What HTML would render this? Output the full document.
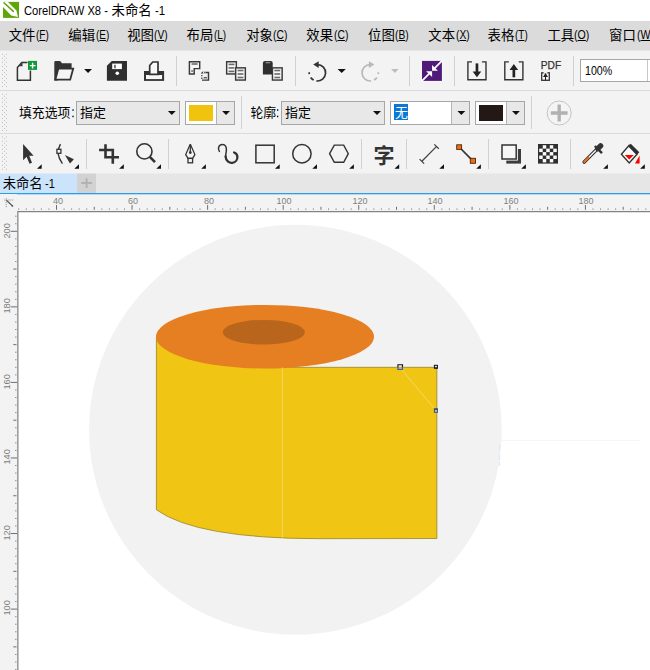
<!DOCTYPE html>
<html><head><meta charset="utf-8"><title>CorelDRAW X8</title>
<style>
html,body{margin:0;padding:0;}
body{width:650px;height:670px;overflow:hidden;background:#fff;position:relative;font-family:"Liberation Sans",sans-serif;}
.a{position:absolute;}
.t{position:absolute;white-space:nowrap;transform-origin:0 50%;line-height:1;color:#000;}
u{text-decoration:underline;text-underline-offset:1px;}
svg.ov{position:absolute;left:0;top:0;width:650px;height:670px;overflow:hidden;}
svg.ov text{font-family:"Liberation Sans","Noto Sans CJK SC",sans-serif;}
</style></head><body>
<div class="a" style="left:0px;top:0px;width:650px;height:21px;background:#fff;"></div>
<div class="a" style="left:0px;top:21px;width:650px;height:29px;background:#dbdbdb;"></div>
<div class="a" style="left:0px;top:50px;width:650px;height:123px;background:#f3f3f3;"></div>
<div class="a" style="left:0px;top:50px;width:650px;height:1px;background:#e6e6e6;"></div>
<div class="a" style="left:0px;top:90px;width:650px;height:1px;background:#dadada;"></div>
<div class="a" style="left:0px;top:133px;width:650px;height:1px;background:#dadada;"></div>
<div class="a" style="left:0px;top:173px;width:650px;height:1px;background:#ececec;"></div>
<div class="a" style="left:0px;top:174px;width:650px;height:19px;background:#e6e6e6;"></div>
<div class="a" style="left:0px;top:173px;width:77px;height:1px;background:#dfecf7;"></div>
<div class="a" style="left:0px;top:174px;width:77px;height:19px;background:#cce4fb;"></div>
<div class="a" style="left:77px;top:173px;width:19px;height:1px;background:#e2e2e2;"></div>
<div class="a" style="left:77px;top:174px;width:19px;height:19px;background:#d2d2d2;"></div>
<div class="a" style="left:0px;top:193px;width:650px;height:1px;background:#2a9ee6;"></div>
<div class="a" style="left:0px;top:194px;width:650px;height:18px;background:#f3f3f3;"></div>
<div class="a" style="left:0px;top:194px;width:650px;height:1px;background:#b7d9ef;"></div>
<div class="a" style="left:0px;top:194px;width:17px;height:476px;background:#f3f3f3;"></div>
<div class="a" style="left:176px;top:56px;width:1px;height:30px;background:#d0d0d0;"></div>
<div class="a" style="left:295px;top:56px;width:1px;height:30px;background:#d0d0d0;"></div>
<div class="a" style="left:409px;top:56px;width:1px;height:30px;background:#d0d0d0;"></div>
<div class="a" style="left:454px;top:56px;width:1px;height:30px;background:#d0d0d0;"></div>
<div class="a" style="left:573px;top:56px;width:1px;height:30px;background:#d0d0d0;"></div>
<div class="a" style="left:241px;top:96px;width:1px;height:33px;background:#d0d0d0;"></div>
<div class="a" style="left:531px;top:96px;width:1px;height:33px;background:#d0d0d0;"></div>
<div class="a" style="left:86px;top:139px;width:1px;height:30px;background:#d0d0d0;"></div>
<div class="a" style="left:168px;top:139px;width:1px;height:30px;background:#d0d0d0;"></div>
<div class="a" style="left:361px;top:139px;width:1px;height:30px;background:#d0d0d0;"></div>
<div class="a" style="left:406px;top:139px;width:1px;height:30px;background:#d0d0d0;"></div>
<div class="a" style="left:488px;top:139px;width:1px;height:30px;background:#d0d0d0;"></div>
<div class="a" style="left:570px;top:139px;width:1px;height:30px;background:#d0d0d0;"></div>
<div class="a" style="left:580px;top:59px;width:80px;height:23px;background:#fff;border:1px solid #a6a6a6;box-sizing:border-box;"></div>
<div class="a" style="left:647px;top:60px;width:1px;height:21px;background:#c8c8c8;"></div>
<div class="a" style="left:76px;top:101px;width:104px;height:24px;background:#e8e8e8;border:1px solid #a6a6a6;box-sizing:border-box;"></div>
<div class="a" style="left:185px;top:101px;width:50px;height:24px;background:#fff;border:1px solid #a6a6a6;box-sizing:border-box;"></div>
<div class="a" style="left:216px;top:102px;width:18px;height:22px;background:#e8e8e8;"></div>
<div class="a" style="left:216px;top:102px;width:1px;height:22px;background:#b4b4b4;"></div>
<div class="a" style="left:189px;top:105px;width:24px;height:16px;background:#f0c30f;"></div>
<div class="a" style="left:281px;top:101px;width:104px;height:24px;background:#e8e8e8;border:1px solid #a6a6a6;box-sizing:border-box;"></div>
<div class="a" style="left:390px;top:101px;width:80px;height:24px;background:#fff;border:1px solid #a6a6a6;box-sizing:border-box;"></div>
<div class="a" style="left:451px;top:102px;width:18px;height:22px;background:#e8e8e8;"></div>
<div class="a" style="left:451px;top:102px;width:1px;height:22px;background:#b4b4b4;"></div>
<div class="a" style="left:394px;top:104px;width:14px;height:16px;background:#0a78d6;"></div>
<div class="a" style="left:475px;top:101px;width:50px;height:24px;background:#fff;border:1px solid #a6a6a6;box-sizing:border-box;"></div>
<div class="a" style="left:506px;top:102px;width:18px;height:22px;background:#e8e8e8;"></div>
<div class="a" style="left:506px;top:102px;width:1px;height:22px;background:#b4b4b4;"></div>
<div class="a" style="left:479px;top:105px;width:24px;height:16px;background:#231815;"></div>
<svg class="ov" viewBox="0 0 650 670">
<ellipse cx="295.4" cy="429.7" rx="206.3" ry="205" fill="#f2f2f2"/><path d="M501 440.5H640" stroke="#f6f6f6" stroke-width="1"/><path d="M499.6 445v5M499.6 455v5M499.6 462v4" stroke="#d6e6f4" stroke-width="1"/>
<path d="M156.4 337 L156.4 509.8 Q196.5 538.7 320 538.7 L436.9 538.5 L436.9 367.3 L282 367.3 Q200 362 156.5 337Z" fill="#f0c514" stroke="#7a6a12" stroke-width="0.6"/>
<ellipse cx="265" cy="336.7" rx="109" ry="31.8" fill="#e67e22"/>
<ellipse cx="263.8" cy="332.2" rx="41" ry="12.3" fill="#b9651b"/>
<path d="M282.4 367.5V537.8" stroke="#f5dc7a" stroke-width="0.8" fill="none"/>
<path d="M400 367.5L436 410.7" stroke="#f5dc7a" stroke-width="0.8" fill="none"/>
<path d="M397.9 367.3V364.7H402.5V367.3" fill="none" stroke="#111" stroke-width="1.1"/><path d="M397.9 367.3V369.4H402.5V367.3" fill="none" stroke="#2a62d8" stroke-width="1.1"/>
<rect x="434.4" y="365.3" width="3" height="3" fill="#3a66c8" stroke="#111" stroke-width="1"/><path d="M434.9 365.9H436.9V367H434.9Z" fill="#ddd"/>
<rect x="434.4" y="409.3" width="3" height="3" fill="#e9c63a" stroke="#2050c0" stroke-width="1"/><path d="M433.9 408.8H437.9" stroke="#222" stroke-width="0.7"/>
<path d="M2 53.80h1v1h-1zM6 53.80h1v1h-1zM4 55.81h1v1h-1zM2 57.83h1v1h-1zM6 57.83h1v1h-1zM4 59.84h1v1h-1zM2 61.86h1v1h-1zM6 61.86h1v1h-1zM4 63.87h1v1h-1zM2 65.89h1v1h-1zM6 65.89h1v1h-1zM4 67.90h1v1h-1zM2 69.92h1v1h-1zM6 69.92h1v1h-1zM4 71.93h1v1h-1zM2 73.95h1v1h-1zM6 73.95h1v1h-1zM4 75.96h1v1h-1zM2 77.98h1v1h-1zM6 77.98h1v1h-1zM4 79.99h1v1h-1zM2 82.01h1v1h-1zM6 82.01h1v1h-1zM4 84.02h1v1h-1zM2 86.04h1v1h-1zM6 86.04h1v1h-1zM2 93.80h1v1h-1zM6 93.80h1v1h-1zM4 95.81h1v1h-1zM2 97.83h1v1h-1zM6 97.83h1v1h-1zM4 99.84h1v1h-1zM2 101.86h1v1h-1zM6 101.86h1v1h-1zM4 103.87h1v1h-1zM2 105.89h1v1h-1zM6 105.89h1v1h-1zM4 107.90h1v1h-1zM2 109.92h1v1h-1zM6 109.92h1v1h-1zM4 111.93h1v1h-1zM2 113.95h1v1h-1zM6 113.95h1v1h-1zM4 115.96h1v1h-1zM2 117.98h1v1h-1zM6 117.98h1v1h-1zM4 119.99h1v1h-1zM2 122.01h1v1h-1zM6 122.01h1v1h-1zM4 124.02h1v1h-1zM2 126.04h1v1h-1zM6 126.04h1v1h-1zM4 128.05h1v1h-1zM2 130.07h1v1h-1zM6 130.07h1v1h-1zM2 136.60h1v1h-1zM6 136.60h1v1h-1zM4 138.61h1v1h-1zM2 140.63h1v1h-1zM6 140.63h1v1h-1zM4 142.64h1v1h-1zM2 144.66h1v1h-1zM6 144.66h1v1h-1zM4 146.67h1v1h-1zM2 148.69h1v1h-1zM6 148.69h1v1h-1zM4 150.70h1v1h-1zM2 152.72h1v1h-1zM6 152.72h1v1h-1zM4 154.73h1v1h-1zM2 156.75h1v1h-1zM6 156.75h1v1h-1zM4 158.76h1v1h-1zM2 160.78h1v1h-1zM6 160.78h1v1h-1zM4 162.79h1v1h-1zM2 164.81h1v1h-1zM6 164.81h1v1h-1zM4 166.82h1v1h-1zM2 168.84h1v1h-1zM6 168.84h1v1h-1z" fill="#bdbdbd"/>
<path d="M17.85 670V211.5H650" fill="none" stroke="#838383" stroke-width="1.25"/>
<path d="M56.50 209.8V205.00M94.28 209.8V206.80M132.06 209.8V205.00M169.84 209.8V206.80M207.62 209.8V205.00M245.40 209.8V206.80M283.18 209.8V205.00M320.96 209.8V206.80M358.74 209.8V205.00M396.52 209.8V206.80M434.30 209.8V205.00M472.08 209.8V206.80M509.86 209.8V205.00M547.64 209.8V206.80M585.42 209.8V205.00M623.20 209.8V206.80M17.2 684.66H10.70M16.5 646.88H13.30M17.2 609.10H10.70M16.5 571.32H13.30M17.2 533.54H10.70M16.5 495.76H13.30M17.2 457.98H10.70M16.5 420.20H13.30M17.2 382.42H10.70M16.5 344.64H13.30M17.2 306.86H10.70M16.5 269.08H13.30M17.2 231.30H10.70" stroke="#6e6e6e" stroke-width="1" fill="none"/>
<path d="M18.72 209.8V208.40M26.28 209.8V208.40M33.83 209.8V208.40M41.39 209.8V208.40M48.94 209.8V208.40M64.06 209.8V208.40M71.61 209.8V208.40M79.17 209.8V208.40M86.72 209.8V208.40M101.84 209.8V208.40M109.39 209.8V208.40M116.95 209.8V208.40M124.50 209.8V208.40M139.62 209.8V208.40M147.17 209.8V208.40M154.73 209.8V208.40M162.28 209.8V208.40M177.40 209.8V208.40M184.95 209.8V208.40M192.51 209.8V208.40M200.06 209.8V208.40M215.18 209.8V208.40M222.73 209.8V208.40M230.29 209.8V208.40M237.84 209.8V208.40M252.96 209.8V208.40M260.51 209.8V208.40M268.07 209.8V208.40M275.62 209.8V208.40M290.74 209.8V208.40M298.29 209.8V208.40M305.85 209.8V208.40M313.40 209.8V208.40M328.52 209.8V208.40M336.07 209.8V208.40M343.63 209.8V208.40M351.18 209.8V208.40M366.30 209.8V208.40M373.85 209.8V208.40M381.41 209.8V208.40M388.96 209.8V208.40M404.08 209.8V208.40M411.63 209.8V208.40M419.19 209.8V208.40M426.74 209.8V208.40M441.86 209.8V208.40M449.41 209.8V208.40M456.97 209.8V208.40M464.52 209.8V208.40M479.64 209.8V208.40M487.19 209.8V208.40M494.75 209.8V208.40M502.30 209.8V208.40M517.42 209.8V208.40M524.97 209.8V208.40M532.53 209.8V208.40M540.08 209.8V208.40M555.20 209.8V208.40M562.75 209.8V208.40M570.31 209.8V208.40M577.86 209.8V208.40M592.98 209.8V208.40M600.53 209.8V208.40M608.09 209.8V208.40M615.64 209.8V208.40M630.76 209.8V208.40M638.31 209.8V208.40M645.87 209.8V208.40M653.42 209.8V208.40M16.5 677.10H15.10M16.5 669.55H15.10M16.5 661.99H15.10M16.5 654.44H15.10M16.5 639.32H15.10M16.5 631.77H15.10M16.5 624.21H15.10M16.5 616.66H15.10M16.5 601.54H15.10M16.5 593.99H15.10M16.5 586.43H15.10M16.5 578.88H15.10M16.5 563.76H15.10M16.5 556.21H15.10M16.5 548.65H15.10M16.5 541.10H15.10M16.5 525.98H15.10M16.5 518.43H15.10M16.5 510.87H15.10M16.5 503.32H15.10M16.5 488.20H15.10M16.5 480.65H15.10M16.5 473.09H15.10M16.5 465.54H15.10M16.5 450.42H15.10M16.5 442.87H15.10M16.5 435.31H15.10M16.5 427.76H15.10M16.5 412.64H15.10M16.5 405.09H15.10M16.5 397.53H15.10M16.5 389.98H15.10M16.5 374.86H15.10M16.5 367.31H15.10M16.5 359.75H15.10M16.5 352.20H15.10M16.5 337.08H15.10M16.5 329.53H15.10M16.5 321.97H15.10M16.5 314.42H15.10M16.5 299.30H15.10M16.5 291.75H15.10M16.5 284.19H15.10M16.5 276.64H15.10M16.5 261.52H15.10M16.5 253.97H15.10M16.5 246.41H15.10M16.5 238.86H15.10M16.5 223.74H15.10M16.5 216.19H15.10" stroke="#8c8c8c" stroke-width="1" fill="none"/>
<g fill="none"><path d="M4.3 200H14M6.2 198.2V207.8" stroke="#8a8a8a" stroke-width="1" stroke-dasharray="1 1"/><path d="M6.4 200.2L12.3 205.8" stroke="#5a5a5a" stroke-width="1.2"/><circle cx="12.4" cy="205.9" r="0.9" fill="#5a5a5a"/></g>
<text x="111.6" y="15.3" font-size="13.4" fill="#000">未命名</text>
<text x="8.7" y="40.2" font-size="13.4" fill="#000">文件</text>
<text x="68.3" y="40.2" font-size="13.4" fill="#000">编辑</text>
<text x="127.2" y="40.2" font-size="13.4" fill="#000">视图</text>
<text x="186.6" y="40.2" font-size="13.4" fill="#000">布局</text>
<text x="246.2" y="40.2" font-size="13.4" fill="#000">对象</text>
<text x="306.3" y="40.2" font-size="13.4" fill="#000">效果</text>
<text x="368.1" y="40.2" font-size="13.4" fill="#000">位图</text>
<text x="428.3" y="40.2" font-size="13.4" fill="#000">文本</text>
<text x="487.6" y="40.2" font-size="13.4" fill="#000">表格</text>
<text x="547.4" y="40.2" font-size="13.4" fill="#000">工具</text>
<text x="609" y="40.2" font-size="13.4" fill="#000">窗口</text>
<text x="19" y="117.4" font-size="12.85" fill="#000">填充选项</text>
<text x="80" y="117.4" font-size="12.9" fill="#000">指定</text>
<text x="250.4" y="117.4" font-size="12.9" fill="#000">轮廓</text>
<text x="285" y="117.4" font-size="12.9" fill="#000">指定</text>
<text x="394.9" y="117.4" font-size="12.9" fill="#fff">无</text>
<text x="2.7" y="188" font-size="13.3" fill="#000">未命名</text>
<g fill="#000"><rect x="72.4" y="109.3" width="1.3" height="1.5"/><rect x="72.4" y="115.7" width="1.3" height="1.5"/><rect x="277" y="109.3" width="1.3" height="1.5"/><rect x="277" y="115.7" width="1.3" height="1.5"/></g>
<g><rect x="3" y="1.9" width="16" height="16" fill="#5fa607"/><path d="M3 1.9H8L16.4 10.4L18 17L11.2 15.4L3 7Z" fill="#fff"/><path d="M4 2.7L13.3 11.4" stroke="#5fa607" stroke-width="1.5" stroke-linecap="round"/></g>
<g fill="none" stroke="#333" stroke-width="1.5"><path d="M27.5 62.6H21.8L17.4 67.6V80.2H30.4V70.5"/></g><path d="M22.5 62.5V66.3H19.3Z" fill="#333"/><rect x="28" y="60.9" width="9" height="9" fill="#0f9a38"/><path d="M29.8 65.6H35.5M32.6 62.7V68.4" stroke="#fff" stroke-width="1.4" fill="none"/>
<g><path d="M54.3 62.2Q54.3 60.9 55.6 60.9H59.6Q60.4 60.9 60.9 61.7L61.9 63.3H71.6V72H58V80.6H54.3Z" fill="#333"/><path d="M58.4 68.6H73.2L70.2 79.7H55.3Z" fill="#f4f4f4" stroke="#333" stroke-width="1.8" stroke-linejoin="miter"/></g>
<path d="M84.1 69H92L88.05 73Z" fill="#111"/>
<g><path d="M111.8 60.9H127V80.7H106.9V65.8Z" fill="#2f2f2f"/><rect x="112.2" y="63.6" width="9.7" height="5.5" fill="#fff"/><rect x="114.1" y="64.8" width="1.7" height="3.5" fill="#666"/><circle cx="117.3" cy="73.2" r="1.8" fill="#fff"/></g>
<g><path d="M144 71H164.1V80.9H144Z" fill="#333"/><rect x="146" y="75" width="16.1" height="4.1" fill="#f8f8f8"/><path d="M149.7 74.3V65.5L152.7 62H158V74.3Z" fill="#f8f8f8" stroke="#333" stroke-width="1.7"/></g>
<g fill="#f6f6f6" stroke="#3a3a3a" stroke-width="1.45"><path d="M189.4 61.7H199.7V68.6H194.2V74H189.4Z"/></g><path d="M191.6 64H197.6" stroke="#6a6a6a" stroke-width="1.6"/><path d="M191.2 71H193" stroke="#6a6a6a" stroke-width="1.6"/><path d="M202 72.4H208.5V80.1H202" fill="none" stroke="#3a3a3a" stroke-width="1.45"/><path d="M201.8 72.4V80" stroke="#3a3a3a" stroke-width="1.2" stroke-dasharray="1.3 1.3" fill="none"/><path d="M202 72.4H206" stroke="#f0f0f0" stroke-width="1.4" stroke-dasharray="1.2 1.4" stroke-dashoffset="-1"/><path d="M203.6 77.7H207" stroke="#6a6a6a" stroke-width="1.6"/>
<rect x="226.65" y="61.75" width="9.7" height="12.2" fill="#f6f6f6" stroke="#3a3a3a" stroke-width="1.45"/><path d="M228.6 64.4H234.4" stroke="#6a6a6a" stroke-width="1.6"/><path d="M228.6 67.9H234.4" stroke="#6a6a6a" stroke-width="1.6"/><path d="M228.6 71.4H234.4" stroke="#6a6a6a" stroke-width="1.6"/><rect x="235.65" y="67.85000000000001" width="9.7" height="12.2" fill="#f6f6f6" stroke="#3a3a3a" stroke-width="1.45"/><path d="M237.6 70.5H243.4" stroke="#6a6a6a" stroke-width="1.6"/><path d="M237.6 74.0H243.4" stroke="#6a6a6a" stroke-width="1.6"/><path d="M237.6 77.5H243.4" stroke="#6a6a6a" stroke-width="1.6"/>
<path d="M262.9 63.1Q262.9 61.1 264.9 61.1H270.7Q272.7 61.1 272.7 63.1V74.6H262.9Z" fill="#2f2f2f"/><path d="M265.6 62.6H270.2" stroke="#8a8a8a" stroke-width="1.4"/><rect x="272.45" y="67.85000000000001" width="9.7" height="12.2" fill="#f6f6f6" stroke="#3a3a3a" stroke-width="1.45"/><path d="M274.40000000000003 70.5H280.2" stroke="#6a6a6a" stroke-width="1.6"/><path d="M274.40000000000003 74.0H280.2" stroke="#6a6a6a" stroke-width="1.6"/><path d="M274.40000000000003 77.5H280.2" stroke="#6a6a6a" stroke-width="1.6"/>
<path d="M317.40 64.60A8.2 8.2 0 1 1 316.40 80.94" fill="none" stroke="#333" stroke-width="1.7"/><path d="M313.68 80.11A8.2 8.2 0 0 1 310.68 77.50" fill="none" stroke="#333" stroke-width="1.7"/><path d="M309.32 74.22A8.2 8.2 0 0 1 309.22 72.23" fill="none" stroke="#333" stroke-width="1.7"/><path d="M313.20 64.60L318.70 61.30V67.90Z" fill="#333"/>
<path d="M337.6 68.9H345.8L341.70000000000005 73Z" fill="#111"/>
<path d="M370.20 64.60A8.2 8.2 0 1 0 371.20 80.94" fill="none" stroke="#b9b9b9" stroke-width="1.7"/><path d="M373.92 80.11A8.2 8.2 0 0 0 376.92 77.50" fill="none" stroke="#b9b9b9" stroke-width="1.7"/><path d="M378.28 74.22A8.2 8.2 0 0 0 378.38 72.23" fill="none" stroke="#b9b9b9" stroke-width="1.7"/><path d="M374.40 64.60L368.90 61.30V67.90Z" fill="#b9b9b9"/>
<path d="M391.1 68.9H398.7L394.9 73Z" fill="#bdbdbd"/>
<g><rect x="421.5" y="60.4" width="20.9" height="21" fill="#fbfbfb"/><rect x="422" y="60.9" width="19.9" height="20" fill="#4f1a78"/><path d="M441.9 60.9L434 68.8M422 80.9L430 72.9" stroke="#fff" stroke-width="1.7"/><path d="M432.1 70.8V64.9L437.9 70.8ZM432.1 71.3H426.1L432.1 77.1Z" fill="#fff"/></g>
<path d="M472.0 61.9H467.9V79.8H486.0V61.9H481.9" fill="none" stroke="#333" stroke-width="1.4"/><path d="M476.95 63.4V73" stroke="#222" stroke-width="2.7"/><path d="M472.65 71.6H481.25L476.95 77.3Z" fill="#222"/>
<path d="M508.90000000000003 61.9H504.8V79.8H522.9V61.9H518.8000000000001" fill="none" stroke="#333" stroke-width="1.4"/><path d="M513.85 77.3V68.5" stroke="#222" stroke-width="2.7"/><path d="M509.55 70H518.15L513.85 64.1Z" fill="#222"/>
<rect x="541.7" y="72.8" width="7.6" height="7.5" fill="#fafafa" stroke="#333" stroke-width="1.3"/><path d="M543.6 72.8H547.4" stroke="#fafafa" stroke-width="1.5"/><path d="M543 76.9L545.5 73L548 76.9Z" fill="#222"/><path d="M545.5 76.5V80.3" stroke="#222" stroke-width="1.1"/>
<path d="M167.9 111H175.7L171.8 115Z" fill="#111"/>
<path d="M222.1 111H230L226.05 115Z" fill="#111"/>
<path d="M373 111H381L377.0 115Z" fill="#111"/>
<path d="M457.4 111H465.3L461.35 115Z" fill="#111"/>
<path d="M512 111H519.9L515.95 115Z" fill="#111"/>
<circle cx="559.2" cy="113" r="12" fill="#f4f4f4" stroke="#c4c4c4" stroke-width="1"/><path d="M550.8 113H567.6M559.2 104.6V121.4" stroke="#b1b1b1" stroke-width="3.3"/>
<path d="M81.2 183.1H92M86.6 178.2V188" stroke="#b2b2b2" stroke-width="2"/>
<path d="M23.1 143.9V160.2L26.6 156.8L29.5 163.8L32 162.7L29.2 155.8H33.6Z" fill="#333"/><path d="M41.7 164.2V168.8H37.0Z" fill="#111"/>
<path d="M60.4 144.2C57.7 149 56.7 156 62.4 163.6" fill="none" stroke="#333" stroke-width="1.4"/><rect x="56.9" y="149.3" width="4" height="4" fill="#fafafa" stroke="#333" stroke-width="1.3"/><path d="M64.9 154.9L73.9 159.2L70 163.4Z" fill="#333"/><path d="M79 164.2V168.8H74.3Z" fill="#111"/>
<path d="M105.5 144.3V157.3H119M99.1 150H112.8V163.7" fill="none" stroke="#333" stroke-width="2.6"/><path d="M123.8 164.2V168.8H119.1Z" fill="#111"/>
<circle cx="144.4" cy="151.4" r="7.6" fill="none" stroke="#333" stroke-width="1.6"/><path d="M149.8 156.9L155 162.2" stroke="#333" stroke-width="2.6"/><path d="M161 164.2V168.8H156.3Z" fill="#111"/>
<g fill="none" stroke="#333" stroke-width="1.3"><path d="M190.1 144.6L185.7 154.6L188 158.4H192.6L194.9 154.6L190.5 144.6Z"/><path d="M190.3 145V152"/><circle cx="190.3" cy="152.6" r="0.8" fill="#333"/><rect x="188" y="158.4" width="4.6" height="4.4"/></g><path d="M205.9 164.2V168.8H201.20000000000002Z" fill="#111"/>
<path d="M219.4 151.4C217.4 148.5 218.6 144.6 222.4 144.5C225.4 144.4 226.6 147 226.4 150C226.2 153.5 225 156 225.8 158.6" fill="none" stroke="#333" stroke-width="1.5" stroke-linecap="round"/><path d="M225.6 156.5C225.8 160.6 229.2 163.3 232.4 162.8C235.6 162.3 237.6 159.5 237.4 156.6C237.3 154.6 236 153.2 234.1 152.5" fill="none" stroke="#333" stroke-width="2.3" stroke-linecap="round"/>
<rect x="255.9" y="145.2" width="18.3" height="17.6" fill="none" stroke="#333" stroke-width="1.5"/><path d="M279.7 164.2V168.8H275.0Z" fill="#111"/>
<circle cx="301.9" cy="153.8" r="9.2" fill="none" stroke="#333" stroke-width="1.5"/><path d="M317 164.2V168.8H312.3Z" fill="#111"/>
<path d="M329.6 153.7L334.3 145.1H343.7L348.3 153.7L343.7 162.3H334.3Z" fill="none" stroke="#333" stroke-width="1.4"/><path d="M353.9 164.2V168.8H349.2Z" fill="#111"/>
<text x="373.4" y="162.8" font-size="21" font-weight="bold" fill="#333">字</text><path d="M399.2 164.2V168.8H394.5Z" fill="#111"/>
<path d="M421.9 161.2L436.6 146.4M419.6 159.1L424.1 163.6M434.3 144.4L438.8 148.8" fill="none" stroke="#444" stroke-width="1.3"/><path d="M444 164.2V168.8H439.3Z" fill="#111"/>
<path d="M459.2 147L472.8 160.8" stroke="#333" stroke-width="1.7"/><rect x="456.7" y="144.8" width="4.9" height="4.6" fill="#ff6a00" stroke="#3a2a1a" stroke-width="0.9"/><rect x="470.3" y="158.3" width="5.2" height="5" fill="#ff6a00" stroke="#3a2a1a" stroke-width="0.9"/><path d="M480.9 164.2V168.8H476.2Z" fill="#111"/>
<path d="M506.3 149H521V163.6H506.3Z" fill="#3c3c3c"/><rect x="500.6" y="143.6" width="17.3" height="17" fill="#f3f3f3"/><rect x="502" y="145" width="14.2" height="14" fill="#f6f6f6" stroke="#333" stroke-width="1.5"/><path d="M525.9 164.2V168.8H521.1999999999999Z" fill="#111"/>
<rect x="538" y="144" width="20" height="19.6" fill="#2f2f2f"/><rect x="542.72" y="145.20" width="3.52" height="3.44" fill="#fafafa"/><rect x="549.76" y="145.20" width="3.52" height="3.44" fill="#fafafa"/><rect x="539.20" y="148.64" width="3.52" height="3.44" fill="#fafafa"/><rect x="546.24" y="148.64" width="3.52" height="3.44" fill="#fafafa"/><rect x="553.28" y="148.64" width="3.52" height="3.44" fill="#fafafa"/><rect x="542.72" y="152.08" width="3.52" height="3.44" fill="#fafafa"/><rect x="549.76" y="152.08" width="3.52" height="3.44" fill="#fafafa"/><rect x="539.20" y="155.52" width="3.52" height="3.44" fill="#fafafa"/><rect x="546.24" y="155.52" width="3.52" height="3.44" fill="#fafafa"/><rect x="553.28" y="155.52" width="3.52" height="3.44" fill="#fafafa"/><rect x="542.72" y="158.96" width="3.52" height="3.44" fill="#fafafa"/><rect x="549.76" y="158.96" width="3.52" height="3.44" fill="#fafafa"/>
<g><path d="M584.2 162L596.4 149.8" stroke="#333" stroke-width="3.6" stroke-linecap="round"/><path d="M584.4 161.8L596.4 149.8" stroke="#f6f6f6" stroke-width="1.4" stroke-linecap="round"/><path d="M584.3 161.9L588.6 157.6" stroke="#ee6a0c" stroke-width="2" stroke-linecap="round"/><path d="M594.8 146L602 153.2" stroke="#333" stroke-width="2.4"/><path d="M597.8 148.6L600.6 145.8" stroke="#333" stroke-width="5.4" stroke-linecap="round"/></g><path d="M607.9 164.2V168.8H603.1999999999999Z" fill="#111"/>
<g><path d="M629.2 145.2L621.4 154.2L629.2 162.9L637 154.2Z" fill="#fafafa" stroke="#333" stroke-width="1.4"/><path d="M629.4 145L638 153.6" stroke="#2f2f2f" stroke-width="3.8"/><path d="M624.8 155.1H633.8L629.2 159.4Z" fill="#f00"/><path d="M639.6 155.6V163.6H635Z" fill="#f00"/></g><path d="M644.8 164.2V168.8H640.0999999999999Z" fill="#111"/>
</svg>
<span class="t" style="left:24.2px;top:5.2px;font-size:12.4px;transform:scaleX(0.9);color:#000;">CorelDRAW X8 -</span>
<span class="t" style="left:155px;top:5.2px;font-size:12.4px;transform:scaleX(0.92);color:#000;">-1</span>
<span class="t" style="left:35.9px;top:29.4px;font-size:12.3px;transform:scaleX(0.81);color:#000;">(<u>F</u>)</span>
<span class="t" style="left:95.5px;top:29.4px;font-size:12.3px;transform:scaleX(0.81);color:#000;">(<u>E</u>)</span>
<span class="t" style="left:154.4px;top:29.4px;font-size:12.3px;transform:scaleX(0.83);color:#000;">(<u>V</u>)</span>
<span class="t" style="left:213.9px;top:29.4px;font-size:12.3px;transform:scaleX(0.81);color:#000;">(<u>L</u>)</span>
<span class="t" style="left:273.3px;top:29.4px;font-size:12.3px;transform:scaleX(0.84);color:#000;">(<u>C</u>)</span>
<span class="t" style="left:333.5px;top:29.4px;font-size:12.3px;transform:scaleX(0.84);color:#000;">(<u>C</u>)</span>
<span class="t" style="left:395.29999999999995px;top:29.4px;font-size:12.3px;transform:scaleX(0.83);color:#000;">(<u>B</u>)</span>
<span class="t" style="left:455.5px;top:29.4px;font-size:12.3px;transform:scaleX(0.83);color:#000;">(<u>X</u>)</span>
<span class="t" style="left:514.8px;top:29.4px;font-size:12.3px;transform:scaleX(0.81);color:#000;">(<u>T</u>)</span>
<span class="t" style="left:574.4px;top:29.4px;font-size:12.3px;transform:scaleX(0.86);color:#000;">(<u>O</u>)</span>
<span class="t" style="left:636.5px;top:29.4px;font-size:12.3px;transform:scaleX(0.86);color:#000;">(<u>W</u>)</span>
<span class="t" style="left:585px;top:64.6px;font-size:12.4px;transform:scaleX(0.86);color:#000;">100%</span>
<span class="t" style="left:540.8px;top:60.5px;font-size:10.2px;transform:scaleX(1.0);color:#333;-webkit-text-stroke:0.25px #333;">PDF</span>
<span class="t" style="left:44.5px;top:177.6px;font-size:12.4px;transform:scaleX(0.89);color:#000;">-1</span>
<span class="t" style="left:47.5px;top:195.8px;width:20px;text-align:center;font-size:9.5px;color:#808080;transform:scaleX(0.95);transform-origin:50% 50%;">40</span>
<span class="t" style="left:123.06px;top:195.8px;width:20px;text-align:center;font-size:9.5px;color:#808080;transform:scaleX(0.95);transform-origin:50% 50%;">60</span>
<span class="t" style="left:198.62px;top:195.8px;width:20px;text-align:center;font-size:9.5px;color:#808080;transform:scaleX(0.95);transform-origin:50% 50%;">80</span>
<span class="t" style="left:274.18px;top:195.8px;width:20px;text-align:center;font-size:9.5px;color:#808080;transform:scaleX(0.95);transform-origin:50% 50%;">100</span>
<span class="t" style="left:349.74px;top:195.8px;width:20px;text-align:center;font-size:9.5px;color:#808080;transform:scaleX(0.95);transform-origin:50% 50%;">120</span>
<span class="t" style="left:425.3px;top:195.8px;width:20px;text-align:center;font-size:9.5px;color:#808080;transform:scaleX(0.95);transform-origin:50% 50%;">140</span>
<span class="t" style="left:500.86px;top:195.8px;width:20px;text-align:center;font-size:9.5px;color:#808080;transform:scaleX(0.95);transform-origin:50% 50%;">160</span>
<span class="t" style="left:576.42px;top:195.8px;width:20px;text-align:center;font-size:9.5px;color:#808080;transform:scaleX(0.95);transform-origin:50% 50%;">180</span>
<span class="t" style="left:-2.6px;top:603.3000000000001px;width:20px;text-align:center;font-size:9.7px;color:#808080;transform:rotate(-90deg) scaleX(0.95);transform-origin:50% 50%;">100</span>
<span class="t" style="left:-2.6px;top:527.74px;width:20px;text-align:center;font-size:9.7px;color:#808080;transform:rotate(-90deg) scaleX(0.95);transform-origin:50% 50%;">120</span>
<span class="t" style="left:-2.6px;top:452.18px;width:20px;text-align:center;font-size:9.7px;color:#808080;transform:rotate(-90deg) scaleX(0.95);transform-origin:50% 50%;">140</span>
<span class="t" style="left:-2.6px;top:376.62px;width:20px;text-align:center;font-size:9.7px;color:#808080;transform:rotate(-90deg) scaleX(0.95);transform-origin:50% 50%;">160</span>
<span class="t" style="left:-2.6px;top:301.06px;width:20px;text-align:center;font-size:9.7px;color:#808080;transform:rotate(-90deg) scaleX(0.95);transform-origin:50% 50%;">180</span>
<span class="t" style="left:-2.6px;top:225.5px;width:20px;text-align:center;font-size:9.7px;color:#808080;transform:rotate(-90deg) scaleX(0.95);transform-origin:50% 50%;">200</span>
</body></html>
